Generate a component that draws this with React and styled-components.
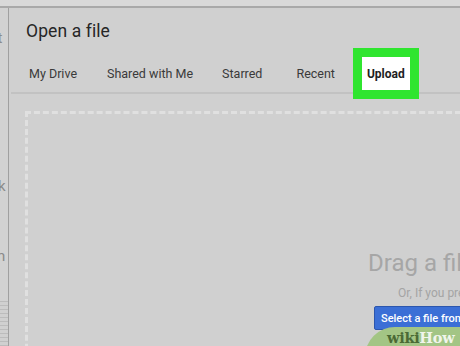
import React from "react";
import styled, { createGlobalStyle } from "styled-components";

const Global = createGlobalStyle`
  html, body { margin: 0; padding: 0; background: #cfcfcf; }
  body { font-family: Roboto, "Liberation Sans", Arial, sans-serif; }
`;

const Page = styled.div`
  position: relative;
  width: 460px;
  height: 346px;
  overflow: hidden;
  background: #cecece;
  display: flex;
  flex-direction: column;
`;

const TopStrip = styled.div`
  height: 6px;
  flex: none;
  background: #d9d9d9;
  border-bottom: 2px solid #a9a9a9;
`;

const Body = styled.div`
  flex: 1;
  display: flex;
  min-height: 0;
`;

const SideStrip = styled.div`
  width: 8px;
  flex: none;
  background: #d2d2d2;
  display: flex;
  flex-direction: column;
  color: #8a8a8a;
  font-size: 15px;
  overflow: hidden;
  padding-top: 21px;
`;

const SideText = styled.div`
  flex: none;
  margin-left: ${(p) => p.$x}px;
  margin-top: ${(p) => p.$gap}px;
  line-height: 18px;
  white-space: nowrap;
`;

const SideLines = styled.div`
  flex: none;
  margin-top: 36px;
  height: 60px;
  background: repeating-linear-gradient(#bcbcbc 0 1px, #d0d0d0 1px 4px);
`;

const Dialog = styled.div`
  flex: none;
  width: 906px;
  background: #d0d0d0;
  border-left: 1px solid #a0a0a0;
  display: flex;
  flex-direction: column;
  color: #2a2a2a;
`;

const Title = styled.div`
  flex: none;
  height: 46px;
  padding-left: 17px;
  display: flex;
  align-items: center;
  font-size: 17.5px;
  color: #262626;
  letter-spacing: 0.1px;
`;

const Tabs = styled.div`
  flex: none;
  height: 38px;
  display: flex;
  align-items: center;
  padding-left: 18px;
  border-bottom: 2px solid #c2c2c2;
  margin-left: 2px;
`;

const Tab = styled.div`
  font-size: 12.5px;
  color: #3a3a3a;
  margin-right: ${(p) => p.$gap}px;
  white-space: nowrap;
`;

const ActiveTab = styled.div`
  height: 33px;
  padding: 0 5px;
  display: flex;
  align-items: center;
  background: #ffffff;
  outline: 9px solid #2fe52f;
  font-size: 12px;
  font-weight: 700;
  color: #1e1e1e;
  margin-left: -8px;
  margin-top: 1px;
`;

const DropZone = styled.div`
  flex: none;
  margin: 17px 0 0 16px;
  width: 866px;
  height: 400px;
  border: 3px dashed #e0e0e0;
  display: flex;
  flex-direction: column;
  align-items: flex-start;
  padding: 135px 0 0 340px;
  box-sizing: border-box;
`;

const DragText = styled.div`
  font-size: 24px;
  color: #a6a6a6;
  line-height: 28px;
  white-space: nowrap;
`;

const OrText = styled.div`
  margin: 9px 0 0 30px;
  font-size: 12px;
  color: #a4a4a4;
  line-height: 14px;
  white-space: nowrap;
`;

const SelectButton = styled.div`
  margin: 6px 0 0 6px;
  height: 22px;
  padding: 0 6px;
  display: flex;
  align-items: center;
  background: #3b6fd6;
  border: 1px solid #2c56ad;
  border-radius: 2px;
  color: #ffffff;
  font-size: 11px;
  font-weight: 500;
  white-space: nowrap;
`;

const Watermark = styled.div`
  position: absolute;
  left: 365px;
  top: 327px;
  width: 110px;
  height: 30px;
  background: #a3c585;
  border-radius: 34px 0 0 0;
  padding: 3px 0 0 22px;
  box-sizing: border-box;
  font-family: "DejaVu Serif", "Liberation Serif", serif;
  font-weight: 700;
  font-size: 14.5px;
  line-height: 16px;
  letter-spacing: -0.3px;
`;

const Wiki = styled.span`
  color: #4b6a35;
`;

const How = styled.span`
  color: #f1f5ec;
`;

export default function App() {
  return (
    <>
      <Global />
      <Page>
        <TopStrip />
        <Body>
          <SideStrip>
            <SideText $x={-8} $gap={0}>rt</SideText>
            <SideText $x={-2} $gap={130}>k</SideText>
            <SideText $x={-3} $gap={52}>n</SideText>
            <SideLines />
          </SideStrip>
          <Dialog>
            <Title>Open a file</Title>
            <Tabs>
              <Tab $gap={30}>My Drive</Tab>
              <Tab $gap={29}>Shared with Me</Tab>
              <Tab $gap={34}>Starred</Tab>
              <Tab $gap={35}>Recent</Tab>
              <ActiveTab>Upload</ActiveTab>
            </Tabs>
            <DropZone>
              <DragText>Drag a file here</DragText>
              <OrText>Or, If you prefer...</OrText>
              <SelectButton>Select a file from your device</SelectButton>
            </DropZone>
          </Dialog>
        </Body>
        <Watermark>
          <Wiki>wiki</Wiki>
          <How>How</How>
        </Watermark>
      </Page>
    </>
  );
}
